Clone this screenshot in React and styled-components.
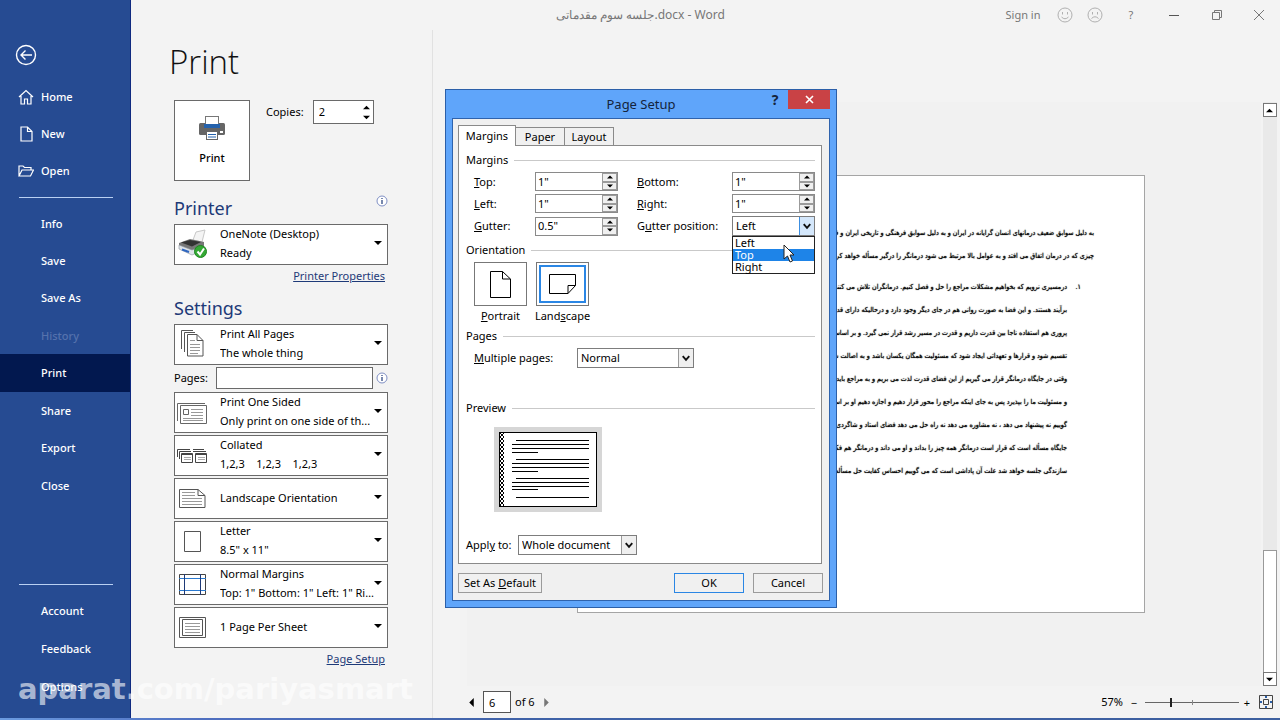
import { useState } from 'react';
import styled, { createGlobalStyle, css } from 'styled-components';

const GlobalStyle = createGlobalStyle`
  * {
    box-sizing: border-box;
  }

  body {
    margin: 0;
    background: #f3f3f3;
    color: #000;
    font: 11px/18px "Noto Sans", "Open Sans", sans-serif;
  }

  button,
  input,
  select {
    font: inherit;
    color: inherit;
    margin: 0;
    padding: 0;
    border-radius: 0;
  }

  h1,
  h2,
  h3,
  p,
  ul,
  ol {
    margin: 0;
    padding: 0;
    font-size: inherit;
    font-weight: 400;
    list-style: none;
  }
`;

/* ---------- shell ---------- */

const Shell = styled.div`
  display: grid;
  grid-template-columns: 131px 1fr;
  grid-template-rows: 1fr 2px;
  min-height: 100vh;
  position: relative;
`;

const Taskbar = styled.div`
  grid-column: 1 / -1;
  background: linear-gradient(90deg, #6b9be0 0, #4f6fc0 16%, #3f62a8 40%, #3c5f9f 100%);
`;

const Sidebar = styled.nav`
  background: #264b92;
  border-right: 1px solid #0f2a80;
  color: #fff;
  display: flex;
  flex-direction: column;
  padding: 44px 0 12px;
`;

const BackButton = styled.button`
  border: 0;
  background: none;
  width: 22px;
  height: 22px;
  margin: 0 0 12px 15px;
`;

const NavItem = styled.a`
  display: flex;
  align-items: center;
  gap: 7px;
  height: ${({ $tall }) => ($tall ? '38px' : '37px')};
  padding-left: ${({ $icon }) => ($icon ? '18px' : '41px')};
  color: ${({ $muted }) => ($muted ? '#5572ad' : '#fff')};
  background: ${({ $active }) => ($active ? '#02184f' : 'transparent')};
  font-weight: 500;
  text-decoration: none;
`;

const NavRule = styled.hr`
  width: 94px;
  margin: ${({ $push }) => ($push ? 'auto 0 7px 19px' : '8px 0 7px 19px')};
  border: 0;
  border-top: 1px solid #b9d0f2;
`;

const Main = styled.main`
  display: grid;
  grid-template-rows: 30px 1fr;
  min-width: 0;
`;

const TitleBar = styled.header`
  display: grid;
  grid-template-columns: 1fr auto 1fr;
  align-items: center;
  color: #777;
`;

const TitleText = styled.div`
  grid-column: 2;
  padding-right: 130px;
  font-size: 12px;
`;

const WindowControls = styled.div`
  display: flex;
  align-items: center;
  justify-content: flex-end;
`;

const ControlButton = styled.button`
  border: 0;
  background: none;
  display: grid;
  place-items: center;
  height: 18px;
  width: ${({ $width }) => $width}px;
  color: #777;
`;

const Columns = styled.div`
  display: grid;
  grid-template-columns: 302px 1fr;
`;

/* ---------- print settings ---------- */

const PrintColumn = styled.section`
  border-right: 1px solid #e1e1e1;
  padding: 8px 44px 0 43px;
`;

const PageTitle = styled.h1`
  font: 300 33px/48px "Open Sans", "Noto Sans", sans-serif;
  margin-left: -5px;
  color: #111;
`;

const PrintRow = styled.div`
  display: flex;
  gap: 16px;
  margin-top: 14px;
`;

const PrintButton = styled.button`
  width: 76px;
  height: 81px;
  border: 1px solid #6a6a6a;
  background: #fff;
  font-weight: 500;
  display: flex;
  flex-direction: column;
  align-items: center;
  justify-content: center;
  gap: 8px;
`;

const CopiesField = styled.label`
  display: flex;
  align-items: center;
  gap: 9px;
  height: 24px;
`;

const Stepper = styled.span`
  display: flex;
  align-items: center;
  width: 61px;
  height: 24px;
  border: 1px solid #6a6a6a;
  background: #fff;
  padding: 0 3px 0 5px;

  input {
    flex: 1;
    min-width: 0;
    border: 0;
    background: none;
    outline: 0;
  }
`;

const ArrowStack = styled.span`
  display: flex;
  flex-direction: column;
  gap: 3px;

  button {
    border: 0;
    background: none;
    display: grid;
  }
`;

const HeadingRow = styled.div`
  display: flex;
  justify-content: space-between;
  margin-top: ${({ $top }) => $top}px;
  padding-bottom: 3px;
`;

const Heading = styled.h2`
  font-size: 18px;
  line-height: 26px;
  color: #1e3a78;
`;

const InfoButton = styled.button`
  border: 0;
  background: none;
  width: 12px;
  height: 12px;
  display: grid;
`;

const Picker = styled.button`
  display: flex;
  align-items: center;
  width: 100%;
  height: 41px;
  margin-bottom: 2px;
  padding: 0 5px 3px 1px;
  border: 1px solid #6a6a6a;
  background: #fff;
  line-height: 19px;
  text-align: left;
`;

const PickerIcon = styled.span`
  width: 32px;
  height: 32px;
  flex: none;
`;

const PickerText = styled.span`
  flex: 1;
  min-width: 0;
  margin-left: 12px;
  display: flex;
  flex-direction: column;

  span {
    white-space: pre;
    overflow: hidden;
    text-overflow: ellipsis;
  }
`;

const LinkRow = styled.div`
  text-align: right;
  padding-right: 3px;

  a {
    color: #1e3a78;
  }
`;

const PagesRow = styled.div`
  display: flex;
  align-items: center;
  margin: 1px 0 3px;

  label {
    width: 42px;
  }

  input {
    flex: 1;
    min-width: 0;
    height: 22px;
    border: 1px solid #6a6a6a;
    background: #fff;
    margin-right: 3px;
  }
`;

/* ---------- preview ---------- */

const PreviewColumn = styled.section`
  display: grid;
  grid-template-columns: 1fr 17px;
  grid-template-rows: 1fr 32px;
  padding: 72px 2px 0 34px;
  min-width: 0;
`;

const Canvas = styled.div`
  background: #f1f1f1;
  display: flex;
  justify-content: center;
  padding: 73px 6px 0 0;
  min-width: 0;
`;

const Paper = styled.article`
  width: 568px;
  height: 438px;
  background: #fff;
  border: 1px solid #a5a5a5;
  padding: 46px 50px 0;
  overflow: hidden;
  direction: rtl;
  font: 700 7px/23px "DejaVu Sans Condensed", "DejaVu Sans", sans-serif;
  text-shadow: 0 0 1px #000;

  p,
  li {
    white-space: nowrap;
  }

  ol {
    padding-right: 27px;
    margin-top: 8px;
    position: relative;
  }
`;

const ListMark = styled.span`
  position: absolute;
  right: 13px;
`;

const Scrollbar = styled.div`
  display: flex;
  flex-direction: column;
  width: 14px;
  justify-self: center;
  background: #e9e9e9;
  padding-top: 1px;
`;

const ScrollButton = styled.button`
  width: 14px;
  height: 14px;
  border: 1px solid #777;
  background: #fff;
  display: grid;
  place-items: center;
`;

const ScrollThumb = styled.div`
  margin-top: auto;
  height: 122px;
  border: 1px solid #999;
  border-bottom: 0;
  background: #fff;
`;

const StatusBar = styled.footer`
  grid-column: 1 / -1;
  display: flex;
  align-items: center;
  justify-content: space-between;
  padding-right: 1px;
`;

const StatusGroup = styled.div`
  display: flex;
  align-items: center;
  gap: ${({ $gap }) => $gap}px;
`;

const PageBox = styled.input`
  width: 28px;
  height: 22px;
  border: 1px solid #555;
  background: #fff;

  && {
    margin: 0 3px 0 6px;
    padding-left: 5px;
  }
`;

const PlainButton = styled.button`
  border: 0;
  background: none;
  display: grid;
  place-items: center;
  width: ${({ $width }) => $width}px;
  height: 16px;
`;

const Zoom = styled.input`
  appearance: none;
  width: 94px;
  height: 14px;
  background:
    linear-gradient(#888, #888) 47px 5px / 1px 5px no-repeat,
    linear-gradient(#666, #666) 0 7px / 100% 1px no-repeat;

  &::-webkit-slider-thumb {
    appearance: none;
    width: 2px;
    height: 9px;
    background: #222;
  }
`;

/* ---------- dialog ---------- */

const Overlay = styled.div`
  position: fixed;
  inset: 0;
  display: flex;
  align-items: center;
  justify-content: center;
  padding: 0 0 23px 2px;
`;

const Dialog = styled.div`
  width: 392px;
  background: #5fa5fa;
  border: 1px solid #2b5fa8;
  padding: 0 6px 6px;
`;

const DialogTitle = styled.div`
  display: grid;
  grid-template-columns: 1fr auto 1fr;
  height: 28px;
  color: #14243c;

  h2 {
    font-size: 13px;
    line-height: 28px;
    grid-column: 2;
  }

  div {
    display: flex;
    justify-content: flex-end;
    gap: 7px;
  }
`;

const HelpButton = styled.button`
  border: 0;
  background: none;
  font-size: 14px;
  font-weight: 700;
  height: 20px;
  width: 12px;
`;

const CloseButton = styled.button`
  width: 42px;
  height: 19px;
  border: 0;
  background: #c94245;
  display: grid;
  place-items: center;
`;

const DialogBody = styled.div`
  border: 1px solid #2f63ad;
  background: #f0f0f0;
  padding: 6px 6px 7px 5px;
  line-height: 14px;

  u {
    text-underline-offset: 1px;
  }
`;

const Tabs = styled.div`
  display: flex;
  align-items: flex-end;
  height: 20px;
`;

const Tab = styled.button`
  border: 1px solid #8a8a8a;
  border-left-width: ${({ $active }) => ($active ? '1px' : '0')};
  border-bottom: 0;
  width: ${({ $width }) => $width}px;
  height: ${({ $active }) => ($active ? '21px' : '18px')};
  background: ${({ $active }) => ($active ? '#fff' : '#f0f0f0')};
  ${({ $active }) => $active && css`
    position: relative;
    margin-bottom: -1px;
  `}
`;

const TabPanel = styled.div`
  border: 1px solid #8a8a8a;
  background: #fff;
  padding: 7px 6px 8px 7px;
  margin-right: 1px;
`;

const GroupTitle = styled.h3`
  display: flex;
  align-items: center;
  gap: 6px;

  &::after {
    content: '';
    flex: 1;
    border-top: 1px solid #c9c9c9;
  }
`;

const FieldGrid = styled.div`
  display: grid;
  grid-template-columns: 61px 83px 1fr 83px;
  row-gap: 3px;
  align-items: center;
  padding: 5px 0 7px 8px;

  label:nth-of-type(even) {
    padding-left: 19px;
  }
`;

const Spin = styled.span`
  display: flex;
  height: 19px;
  border: 1px solid #8a8a8a;
  background: #fff;

  input {
    flex: 1;
    min-width: 0;
    border: 0;
    outline: 0;
    padding-left: 2px;
    background: none;
  }
`;

const SpinButtons = styled.span`
  display: flex;
  flex-direction: column;
  width: 15px;

  button {
    flex: 1;
    min-height: 0;
    border: 1px solid #9b9b9b;
    background: #f0f0f0;
    display: grid;
    place-items: center;
  }
`;

const SelectWrap = styled.span`
  position: relative;
  display: block;
  width: ${({ $width }) => ($width ? `${$width}px` : 'auto')};
  height: 20px;

  select {
    appearance: none;
    width: 100%;
    height: 20px;
    border: 1px solid #7d7d7d;
    background: #fff;
    padding-left: 3px;
    outline: 0;
  }

  select + svg {
    position: absolute;
    right: 1px;
    top: 1px;
    pointer-events: none;
    background: ${({ $open }) => ($open ? '#d4e7fb' : '#efefef')};
    border-left: 1px solid ${({ $open }) => ($open ? '#3c8ee0' : '#999')};
  }
`;

const Options = styled.ul`
  position: absolute;
  z-index: 2;
  top: 20px;
  left: 0;
  right: 0;
  border: 1px solid #222;
  background: #fff;
`;

const Option = styled.li`
  padding-left: 2px;
  line-height: 12px;
  color: ${({ $hot }) => ($hot ? '#fff' : '#000')};
  background: ${({ $hot }) => ($hot ? '#1e84e8' : '#fff')};
`;

const Pointer = styled.svg`
  position: absolute;
  z-index: 3;
  left: 51px;
  top: 28px;
`;

const Orientations = styled.div`
  display: flex;
  gap: 9px;
  padding: 5px 0 6px 8px;
`;

const OrientationButton = styled.button`
  border: 0;
  background: none;
  width: 53px;
  display: flex;
  flex-direction: column;
  align-items: center;
  gap: 3px;
  white-space: nowrap;

  span:first-child {
    width: 53px;
    height: 44px;
    display: grid;
    place-items: center;
    background: #fff;
    border: 1px solid #777;
    outline: ${({ $active }) => ($active ? '2px solid #2a86e4' : '0')};
    outline-offset: -5px;
  }
`;

const FormRow = styled.div`
  display: flex;
  align-items: center;
  padding-left: ${({ $indent }) => $indent || 0}px;
  margin: ${({ $margin }) => $margin};

  label {
    width: ${({ $label }) => $label}px;
  }
`;

const PreviewBox = styled.div`
  width: 108px;
  height: 85px;
  margin: 12px 0 23px 28px;
  background: #d6d6d6;
  padding: 5px;
`;

const Actions = styled.div`
  display: flex;
  gap: 9px;
  margin-top: 9px;
`;

const ActionButton = styled.button`
  width: ${({ $width }) => $width}px;
  height: 20px;
  border: 1px solid ${({ $primary }) => ($primary ? '#2a86e4' : '#9b9b9b')};
  background: #f0f0f0;
  ${({ $push }) => $push && 'margin-left: auto;'}
`;

const Watermark = styled.div`
  position: absolute;
  left: 18px;
  bottom: 14px;
  font: 700 29px/34px "DejaVu Sans", sans-serif;
  color: rgba(255, 255, 255, 0.62);
  pointer-events: none;
`;

/* ---------- icons ---------- */

const Arrow = ({ up, left, right, size = 7, color = '#000' }) => {
  const turn = up ? 180 : left ? 90 : right ? -90 : 0;
  return (
    <svg width={size} height={size} viewBox="0 0 8 8" aria-hidden="true">
      <path d="M0 2h8L4 6z" fill={color} transform={`rotate(${turn} 4 4)`} />
    </svg>
  );
};

const Chevron = () => (
  <svg width="15" height="18" viewBox="0 0 15 18" fill="none" stroke="#111" strokeWidth="2" aria-hidden="true">
    <path d="M4 7l3.500 4L11 7" />
  </svg>
);

const navIcons = {
  Home: <path d="M1 8l7-6.500L15 8M3 7v8h3.500v-5h3v5H13V7" />,
  New: <path d="M3 1h6.500L14 5.500V15H3zM9.500 1v4.500H14" />,
  Open: <path d="M1 13V3h4l1.500 1.500H13V7M1 13L4 7h11.500L12.500 13z" />,
};

const NavIcon = ({ name }) => (
  <svg width="16" height="16" viewBox="0 0 16 16" fill="none" stroke="#fff" strokeWidth="1.2" aria-hidden="true">
    {navIcons[name]}
  </svg>
);

const Info = () => (
  <svg width="12" height="12" viewBox="0 0 12 12" aria-hidden="true">
    <circle cx="6" cy="6" r="5" fill="#fff" stroke="#7f8fc4" />
    <path d="M6 5v4M6 3v1" stroke="#1e3a78" strokeWidth="1.2" />
  </svg>
);

const PrinterIcon = () => (
  <svg width="28" height="26" viewBox="0 0 28 26" aria-hidden="true">
    <rect x="1" y="8" width="26" height="12" rx="1.500" fill="#666" />
    <rect x="7.500" y="1.500" width="13" height="9" fill="#fff" stroke="#777" />
    <rect x="6" y="9" width="16" height="4" fill="#2462ad" />
    <rect x="22" y="16" width="3" height="2" fill="#fff" />
    <rect x="8.500" y="16.500" width="11" height="8" fill="#fff" stroke="#666" />
    <path d="M10 19.500h8M10 22h8" stroke="#2462ad" />
  </svg>
);

const pickerIcons = {
  printer: (
    <>
      <path d="M17 13l3-8 9-2-3 12z" fill="#f4f4f4" stroke="#c8c8c8" />
      <path d="M3 16l11-4 14 3v5l-12 5-13-5z" fill="#777" />
      <path d="M3 18l13 5 12-4v4l-12 5-13-6z" fill="#dfe4ea" stroke="#8b929c" strokeWidth=".6" />
      <path d="M5 15.500l9-2.500 11 2-9 4.500z" fill="#333" />
      <path d="M6 22.500l7 2.500" stroke="#2e66c0" strokeWidth="2" />
      <circle cx="24.500" cy="24.500" r="6" fill="#35a935" stroke="#1d861f" />
      <path d="M21.500 24.500l2.500 3 4-6" fill="none" stroke="#fff" strokeWidth="2" />
    </>
  ),
  pages: (
    <g fill="#fff" stroke="#555">
      <path d="M5.500 22V3.500H17" />
      <path d="M8.500 25V5.500H19" />
      <path d="M11.500 7.500H21l6 6v15.500H11.500zM21 7.500v6h6" />
      <path d="M14 13.500h5M14 17.500h10M14 20.500h10M14 23.500h10M14 26.500h8" stroke="#999" />
    </g>
  ),
  oneSided: (
    <g fill="#fff" stroke="#666">
      <path d="M1.500 26V8.500H29" />
      <path d="M4.500 10.500h26v18h-26z" />
      <path d="M7.500 14.500h5v5h-5z" />
      <path d="M15 14.500h12M15 17.500h12M15 20.500h12M7 23.500h20M7 25.500h20" stroke="#999" />
    </g>
  ),
  collated: (
    <g fill="#fff" stroke="#444">
      <path d="M1.500 19v-7.500H14M3.500 21v-7.500H15M17 11.500h11M17 13.500h13" />
      <path d="M5.500 15.500h11v9h-11zM19.500 15.500h11v9h-11z" />
      <path d="M6 16.500h10M20 16.500h10" />
      <path d="M8 19.500h7M8 21.500h7M22 19.500h7M22 21.500h7" stroke="#aaa" />
    </g>
  ),
  landscape: (
    <g fill="#fff" stroke="#555">
      <path d="M3.500 8.500H22l7 6v12H3.500zM22 8.500v6h7" />
      <path d="M6 11.500h13M6 14.500h13M6 17.500h20M6 20.500h20M6 23.500h20" stroke="#999" />
    </g>
  ),
  letter: <path d="M8.500 7.500h16v20h-16z" fill="#fff" stroke="#555" />,
  margins: (
    <g fill="none" stroke="#444">
      <path d="M3.500 7.500h26v20h-26z" />
      <path d="M3 11.500h27M3 23.500h27" stroke="#2b7ad0" />
      <path d="M8.500 7v21M24.500 7v21" stroke="#1e3a78" />
    </g>
  ),
  sheet: (
    <g fill="none" stroke="#555">
      <path d="M3.500 7.500h26v20h-26zM6.500 9.500h20v16h-20z" />
      <path d="M9 13.500h15M9 16.500h15M9 19.500h15M9 22.500h15" stroke="#999" />
    </g>
  ),
};

const Face = ({ sad }) => (
  <svg width="16" height="16" viewBox="0 0 16 16" fill="none" stroke="#b0b0b0" aria-hidden="true">
    <circle cx="8" cy="8" r="7" />
    <path d="M5.500 5v2.500M10.500 5v2.500" />
    <path d={sad ? 'M4.500 11.500q3.500-3.500 7 0' : 'M4.500 10q3.500 3.500 7 0'} />
  </svg>
);

const PreviewDrawing = () => {
  const rows = [8, 12, 16, 20, 27, 31, 35, 39, 46, 50, 54, 57, 65];
  return (
    <svg width="98" height="75" viewBox="0 0 98 75" shapeRendering="crispEdges" aria-hidden="true">
      <defs>
        <pattern id="checker" width="4" height="4" patternUnits="userSpaceOnUse">
          <rect width="4" height="4" fill="#fff" />
          <path d="M0 0h2v2H0zM2 2h2v2H2z" fill="#000" />
        </pattern>
      </defs>
      <rect x=".5" y=".5" width="97" height="74" fill="#fff" stroke="#000" />
      <rect x="1" y="1" width="4" height="73" fill="url(#checker)" />
      {rows.map((y, i) => (
        <rect key={y} x={i % 4 === 0 ? 17 : 13} y={y} width={i % 4 === 3 ? 26 : i % 4 === 0 ? 73 : 77} height="1" />
      ))}
    </svg>
  );
};

/* ---------- data ---------- */

const topNav = ['Home', 'New', 'Open'];
const midNav = ['Info', 'Save', 'Save As', 'History', 'Print', 'Share', 'Export', 'Close'];
const lowNav = ['Account', 'Feedback', 'Options'];

const settings = [
  { icon: 'oneSided', lines: ['Print One Sided', 'Only print on one side of th...'] },
  { icon: 'collated', lines: ['Collated', '1,2,3    1,2,3    1,2,3'] },
  { icon: 'landscape', lines: ['Landscape Orientation'] },
  { icon: 'letter', lines: ['Letter', '8.5" x 11"'] },
  { icon: 'margins', lines: ['Normal Margins', 'Top: 1" Bottom: 1" Left: 1" Ri...'] },
  { icon: 'sheet', lines: ['1 Page Per Sheet'] },
];

const intro = [
  'به دلیل سوابق ضعیف درمانهای انسان گرایانه در ایران و به دلیل سوابق فرهنگی و تاریخی ایران و فرهنگ شا',
  'چیزی که در درمان اتفاق می افتد و به عوامل بالا مرتبط می شود درمانگر را درگیر مسأله خواهد کرد که باید',
];

const points = [
  'درمسیری نرویم که بخواهیم مشکلات مراجع را حل و فصل کنیم. درمانگران تلاش می کنند که به',
  'برآیند هستند. و این فضا به صورت روانی هم در جای دیگر وجود دارد و درحالیکه دارای قدرت و اختیار',
  'پروری هم استفاده ناجا بین قدرت داریم و قدرت در مسیر رشد قرار نمی گیرد. و بر اساس نیازها و',
  'تقسیم شود و قرارها و تعهداتی ایجاد شود که مسئولیت همگان یکسان باشد و به اصالت شرافت و',
  'وقتی در جایگاه درمانگر قرار می گیریم از این فضای قدرت لذت می بریم و به مراجع باید و نباید',
  'و مسئولیت ما را بپذیرد پس به جای اینکه مراجع را محور قرار دهیم و اجازه دهیم او بر اساس توانا',
  'گوییم نه پیشنهاد می دهد ، نه مشاوره می دهد نه راه حل می دهد فضای استاد و شاگردی ، من',
  'جایگاه مسأله است که قرار است درمانگر همه چیز را بداند و او می داند و درمانگر هم فکر می کند',
  'سازندگی جلسه خواهد شد علت آن پاداشی است که می گوییم احساس کفایت حل مسأله ، برتری',
];

/* ---------- parts ---------- */

const PickerButton = ({ icon, lines }) => (
  <Picker type="button">
    <PickerIcon>
      <svg width="32" height="32" viewBox="0 0 32 32" aria-hidden="true">{pickerIcons[icon]}</svg>
    </PickerIcon>
    <PickerText>
      {lines.map((line) => <span key={line}>{line}</span>)}
    </PickerText>
    <Arrow size={8} />
  </Picker>
);

const SpinField = ({ id, label, value }) => (
  <>
    <label htmlFor={id}>{label}</label>
    <Spin>
      <input id={id} defaultValue={value} />
      <SpinButtons>
        <button type="button" aria-label="Increase"><Arrow up size={6} /></button>
        <button type="button" aria-label="Decrease"><Arrow size={6} /></button>
      </SpinButtons>
    </Spin>
  </>
);

const PageSetup = () => {
  const [hot, setHot] = useState('Top');

  return (
    <Overlay>
      <Dialog role="dialog" aria-labelledby="setup-title">
        <DialogTitle>
          <h2 id="setup-title">Page Setup</h2>
          <div>
            <HelpButton type="button">?</HelpButton>
            <CloseButton type="button" aria-label="Close">
              <svg width="9" height="9" viewBox="0 0 9 9" stroke="#fff" strokeWidth="1.600" aria-hidden="true">
                <path d="M1 1l7 7M8 1L1 8" />
              </svg>
            </CloseButton>
          </div>
        </DialogTitle>
        <DialogBody>
          <Tabs role="tablist">
            <Tab type="button" role="tab" $active $width={58}>Margins</Tab>
            <Tab type="button" role="tab" $width={49}>Paper</Tab>
            <Tab type="button" role="tab" $width={49}>Layout</Tab>
          </Tabs>
          <TabPanel>
            <GroupTitle>Margins</GroupTitle>
            <FieldGrid>
              <SpinField id="top" label={<><u>T</u>op:</>} value={'1"'} />
              <SpinField id="bottom" label={<><u>B</u>ottom:</>} value={'1"'} />
              <SpinField id="left" label={<><u>L</u>eft:</>} value={'1"'} />
              <SpinField id="right" label={<><u>R</u>ight:</>} value={'1"'} />
              <SpinField id="gutter" label={<><u>G</u>utter:</>} value={'0.5"'} />
              <label htmlFor="gutter-position">G<u>u</u>tter position:</label>
              <SelectWrap $open>
                <select id="gutter-position"><option>Left</option></select>
                <Chevron />
                <Options role="listbox">
                  {['Left', 'Top', 'Right'].map((side) => (
                    <Option
                      key={side}
                      role="option"
                      aria-selected={hot === side}
                      $hot={hot === side}
                      onMouseEnter={() => setHot(side)}
                    >
                      {side}
                    </Option>
                  ))}
                </Options>
                <Pointer width="12" height="19" viewBox="0 0 12 19" aria-hidden="true">
                  <path d="M1 1v14l3.500-3 2.500 6 2.500-1-2.500-6H11z" fill="#fff" stroke="#222" />
                </Pointer>
              </SelectWrap>
            </FieldGrid>
            <GroupTitle>Orientation</GroupTitle>
            <Orientations>
              <OrientationButton type="button">
                <span>
                  <svg width="21" height="27" viewBox="0 0 21 27" fill="none" stroke="#000" aria-hidden="true">
                    <path d="M.5.5h12l8 7.500v18.500H.5zM12.500.5V8h8" />
                  </svg>
                </span>
                <span><u>P</u>ortrait</span>
              </OrientationButton>
              <OrientationButton type="button" $active>
                <span>
                  <svg width="27" height="20" viewBox="0 0 27 20" fill="none" stroke="#000" aria-hidden="true">
                    <path d="M.5.5h26v11l-7.500 8H.5zM19 19.500v-8h7.500" />
                  </svg>
                </span>
                <span>Land<u>s</u>cape</span>
              </OrientationButton>
            </Orientations>
            <GroupTitle>Pages</GroupTitle>
            <FormRow $indent={8} $margin="5px 0 33px" $label={103}>
              <label htmlFor="multiple"><u>M</u>ultiple pages:</label>
              <SelectWrap $width={117}>
                <select id="multiple"><option>Normal</option></select>
                <Chevron />
              </SelectWrap>
            </FormRow>
            <GroupTitle>Preview</GroupTitle>
            <PreviewBox><PreviewDrawing /></PreviewBox>
            <FormRow $label={52}>
              <label htmlFor="apply">Appl<u>y</u> to:</label>
              <SelectWrap $width={119}>
                <select id="apply"><option>Whole document</option></select>
                <Chevron />
              </SelectWrap>
            </FormRow>
          </TabPanel>
          <Actions>
            <ActionButton type="button" $width={84}>Set As <u>D</u>efault</ActionButton>
            <ActionButton type="button" $width={70} $primary $push>OK</ActionButton>
            <ActionButton type="button" $width={70}>Cancel</ActionButton>
          </Actions>
        </DialogBody>
      </Dialog>
    </Overlay>
  );
};

const App = () => (
  <>
    <GlobalStyle />
    <Shell>
      <Sidebar>
        <BackButton type="button" aria-label="Back">
          <svg width="22" height="22" viewBox="0 0 22 22" fill="none" stroke="#fff" strokeWidth="1.400" aria-hidden="true">
            <circle cx="11" cy="11" r="9.500" />
            <path d="M17 11H6M10.500 6.500L6 11l4.500 4.500" />
          </svg>
        </BackButton>
        {topNav.map((name) => (
          <NavItem key={name} href="#" $icon>
            <NavIcon name={name} />
            {name}
          </NavItem>
        ))}
        <NavRule />
        {midNav.map((name, i) => (
          <NavItem
            key={name}
            href="#"
            $tall={i > 0 && i % 2 === 0}
            $active={name === 'Print'}
            $muted={name === 'History'}
          >
            {name}
          </NavItem>
        ))}
        <NavRule $push />
        {lowNav.map((name) => <NavItem key={name} href="#" $tall>{name}</NavItem>)}
      </Sidebar>
      <Main>
        <TitleBar>
          <TitleText dir="ltr">جلسه سوم مقدماتی.docx - Word</TitleText>
          <WindowControls>
            <ControlButton type="button" $width={54}>Sign&nbsp;in</ControlButton>
            <ControlButton type="button" $width={30} aria-label="Smile"><Face /></ControlButton>
            <ControlButton type="button" $width={30} aria-label="Frown"><Face sad /></ControlButton>
            <ControlButton type="button" $width={42}>?</ControlButton>
            <ControlButton type="button" $width={44} aria-label="Minimize">
              <svg width="10" height="10" viewBox="0 0 10 10" stroke="#555"><path d="M0 5.500h10" /></svg>
            </ControlButton>
            <ControlButton type="button" $width={42} aria-label="Restore">
              <svg width="10" height="10" viewBox="0 0 10 10" fill="none" stroke="#777">
                <path d="M.5 2.500h7v7h-7zM2.500 2.500v-2h7v7h-2" />
              </svg>
            </ControlButton>
            <ControlButton type="button" $width={42} aria-label="Close window">
              <svg width="10" height="10" viewBox="0 0 10 10" stroke="#777"><path d="M0 0l10 10M10 0L0 10" /></svg>
            </ControlButton>
          </WindowControls>
        </TitleBar>
        <Columns>
          <PrintColumn>
            <PageTitle>Print</PageTitle>
            <PrintRow>
              <PrintButton type="button">
                <PrinterIcon />
                Print
              </PrintButton>
              <CopiesField>
                Copies:
                <Stepper>
                  <input defaultValue="2" />
                  <ArrowStack>
                    <button type="button" aria-label="More copies"><Arrow up /></button>
                    <button type="button" aria-label="Fewer copies"><Arrow /></button>
                  </ArrowStack>
                </Stepper>
              </CopiesField>
            </PrintRow>
            <HeadingRow $top={14}>
              <Heading>Printer</Heading>
              <InfoButton type="button" aria-label="Printer status"><Info /></InfoButton>
            </HeadingRow>
            <PickerButton icon="printer" lines={['OneNote (Desktop)', 'Ready']} />
            <LinkRow><a href="#">Printer Properties</a></LinkRow>
            <HeadingRow $top={10}>
              <Heading>Settings</Heading>
            </HeadingRow>
            <PickerButton icon="pages" lines={['Print All Pages', 'The whole thing']} />
            <PagesRow>
              <label htmlFor="pages">Pages:</label>
              <input id="pages" />
              <InfoButton type="button" aria-label="Pages help"><Info /></InfoButton>
            </PagesRow>
            {settings.map((item) => <PickerButton key={item.icon} {...item} />)}
            <LinkRow><a href="#">Page Setup</a></LinkRow>
          </PrintColumn>
          <PreviewColumn>
            <Canvas>
              <Paper>
                {intro.map((line) => <p key={line}>{line}</p>)}
                <ol>
                  {points.map((line, i) => (
                    <li key={line}>
                      {i === 0 && <ListMark>۱.</ListMark>}
                      {line}
                    </li>
                  ))}
                </ol>
              </Paper>
            </Canvas>
            <Scrollbar>
              <ScrollButton type="button" aria-label="Scroll up"><Arrow up /></ScrollButton>
              <ScrollThumb />
              <ScrollButton type="button" aria-label="Scroll down"><Arrow /></ScrollButton>
            </Scrollbar>
            <StatusBar>
              <StatusGroup $gap={1}>
                <PlainButton type="button" $width={9} aria-label="Previous page"><Arrow left size={9} /></PlainButton>
                <PageBox aria-label="Page" defaultValue="6" />
                of 6
                <PlainButton type="button" $width={22} aria-label="Next page">
                  <Arrow right size={9} color="#777" />
                </PlainButton>
              </StatusGroup>
              <StatusGroup $gap={0}>
                57%
                <PlainButton type="button" $width={22}>−</PlainButton>
                <Zoom type="range" aria-label="Zoom" min="0" max="100" defaultValue="27" />
                <PlainButton type="button" $width={16}>+</PlainButton>
                <PlainButton type="button" $width={22} aria-label="Zoom to page">
                  <svg width="14" height="14" viewBox="0 0 14 14" fill="none" stroke="#444" aria-hidden="true">
                    <path d="M.5.5h13v13H.5zM4.500 4.500h5v5h-5z" />
                    <path d="M7 1v2M7 11v2M1 7h2M11 7h2" stroke="#2b5fa8" strokeWidth="2" />
                  </svg>
                </PlainButton>
              </StatusGroup>
            </StatusBar>
          </PreviewColumn>
        </Columns>
      </Main>
      <Taskbar />
      <Watermark>aparat.com/pariyasmart</Watermark>
    </Shell>
    <PageSetup />
  </>
);

export default App;
